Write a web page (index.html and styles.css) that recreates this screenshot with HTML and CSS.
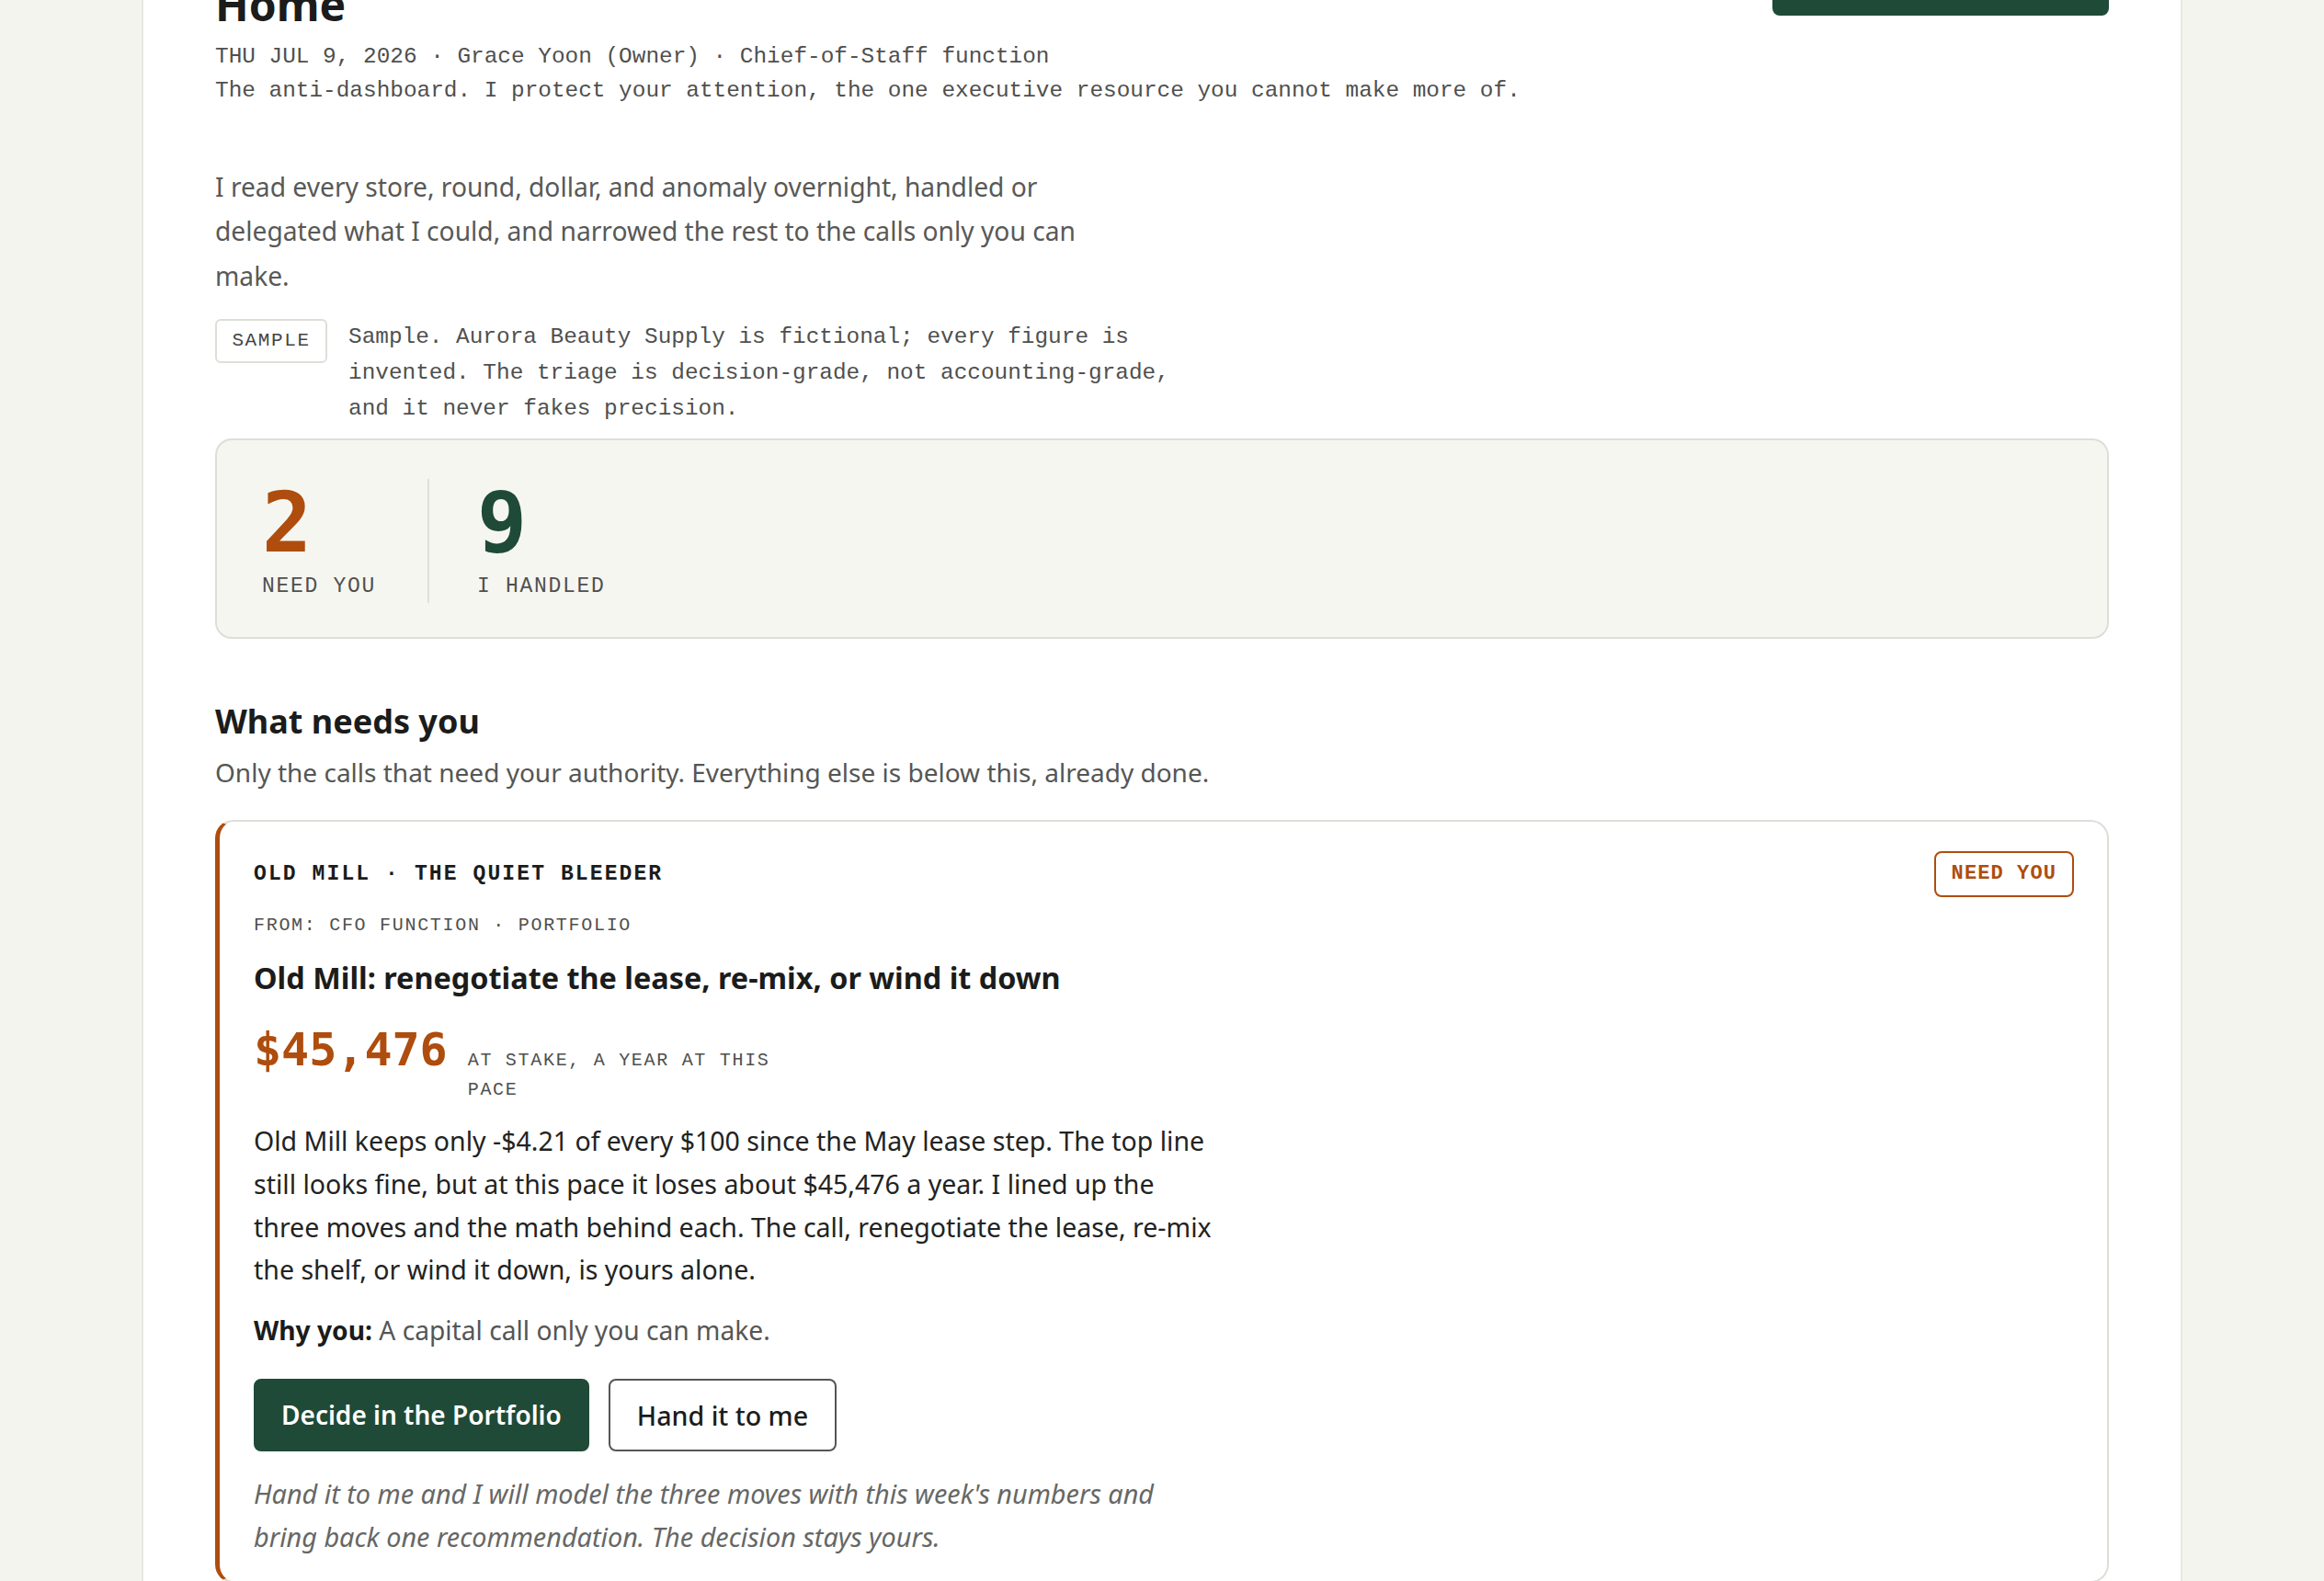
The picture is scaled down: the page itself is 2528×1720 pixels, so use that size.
FILE: index.html
```html
<!DOCTYPE html>
<html lang="en">
<head>
<meta charset="utf-8">
<title>Home · Chief-of-Staff</title>
<link rel="stylesheet" href="styles.css">
</head>
<body>
<main class="shell">
  <header class="top">
    <h1 class="title">Home</h1>
    <button class="btn btn-primary btn-top" type="button">Read the brief</button>
  </header>
  <p class="meta">THU JUL 9, 2026 · Grace Yoon (Owner) · Chief-of-Staff function</p>
  <p class="meta">The anti-dashboard. I protect your attention, the one executive resource you cannot make more of.</p>

  <p class="intro">I read every store, round, dollar, and anomaly overnight, handled or delegated what I could, and narrowed the rest to the calls only you can make.</p>

  <div class="sample">
    <span class="sample-tag">SAMPLE</span>
    <p class="sample-note">Sample. Aurora Beauty Supply is fictional; every figure is invented. The triage is decision-grade, not accounting-grade, and it never fakes precision.</p>
  </div>

  <section class="stats">
    <div class="stat">
      <div class="stat-num stat-num--need">2</div>
      <div class="stat-label">NEED YOU</div>
    </div>
    <div class="stat">
      <div class="stat-num stat-num--done">9</div>
      <div class="stat-label">I HANDLED</div>
    </div>
  </section>

  <section class="needs">
    <h2 class="section-title">What needs you</h2>
    <p class="section-sub">Only the calls that need your authority. Everything else is below this, already done.</p>

    <article class="card">
      <div class="card-head">
        <div class="kicker">OLD MILL · THE QUIET BLEEDER</div>
        <span class="badge">NEED YOU</span>
      </div>
      <div class="from">FROM: CFO FUNCTION · PORTFOLIO</div>
      <h3 class="card-title">Old Mill: renegotiate the lease, re-mix, or wind it down</h3>
      <div class="stake">
        <span class="stake-num">$45,476</span>
        <span class="stake-label">AT STAKE, A YEAR AT THIS PACE</span>
      </div>
      <p class="card-body">Old Mill keeps only -$4.21 of every $100 since the May lease step. The top line still looks fine, but at this pace it loses about $45,476 a year. I lined up the three moves and the math behind each. The call, renegotiate the lease, re-mix the shelf, or wind it down, is yours alone.</p>
      <p class="why"><strong>Why you:</strong> A capital call only you can make.</p>
      <div class="actions">
        <button class="btn btn-primary" type="button">Decide in the Portfolio</button>
        <button class="btn btn-ghost" type="button">Hand it to me</button>
      </div>
      <p class="note">Hand it to me and I will model the three moves with this week's numbers and bring back one recommendation. The decision stays yours.</p>
    </article>
  </section>
</main>
</body>
</html>
```
FILE: styles.css
```css
:root {
  --ink: #1b1c1b;
  --muted: #4f504e;
  --soft: #666765;
  --line: #deded9;
  --rust: #ae4d0e;
  --pine: #1f4a38;
  --paper: #f4f4ef;
  --panel: #f6f6f1;
  --sans: "Noto Sans", "Open Sans", sans-serif;
  --mono: "Liberation Mono", "DejaVu Sans Mono", monospace;
  --mono-num: "DejaVu Sans Mono", "Liberation Mono", monospace;
}

* { box-sizing: border-box; }

html, body {
  margin: 0;
  background: var(--paper);
  color: var(--ink);
  font-family: var(--sans);
}

.shell {
  display: flow-root;
  max-width: 2220px;
  min-height: 100vh;
  margin: 0 auto;
  padding: 0 78px;
  background: #fff;
  border-left: 2px solid #e7e7e2;
  border-right: 2px solid #e7e7e2;
}

/* buttons */
.btn {
  height: 79px;
  padding: 0 28px;
  border-radius: 8px;
  border: 2px solid transparent;
  font-family: var(--sans);
  font-size: 28px;
  font-weight: 600;
  cursor: pointer;
}

.btn-primary {
  background: var(--pine);
  border-color: var(--pine);
  color: #fff;
}

.btn-ghost {
  padding: 0 29px;
  background: #fff;
  border-color: #555654;
  color: var(--ink);
  font-size: 28.6px;
  font-weight: 500;
}

/* page header */
.top {
  display: flex;
  justify-content: space-between;
  align-items: flex-start;
  margin-top: -24px;
}

.title {
  margin: 0;
  font-size: 48px;
  line-height: 57.6px;
  font-weight: 700;
  color: var(--ink);
}

.btn.btn-top {
  width: 366px;
  height: 58px;
  margin-top: -17px;
  line-height: 40px;
  padding-bottom: 14px;
}

.meta {
  margin: 0;
  font-family: var(--mono);
  font-size: 24.4px;
  line-height: 37px;
  color: var(--muted);
}

.top + .meta { margin-top: 9.4px; }

.intro {
  max-width: 975px;
  margin: 62px 0 0;
  font-size: 28.2px;
  line-height: 48.5px;
  color: #585957;
}

/* sample disclaimer */
.sample {
  display: flex;
  align-items: flex-start;
  gap: 23px;
  margin-top: 23px;
}

.sample-tag {
  flex: none;
  width: 122px;
  height: 48px;
  border: 2px solid var(--line);
  border-radius: 6px;
  font-family: var(--mono);
  font-size: 21px;
  line-height: 44px;
  letter-spacing: 1.6px;
  text-align: center;
  color: #444543;
}

.sample-note {
  max-width: 950px;
  margin: 0;
  font-family: var(--mono);
  font-size: 24.4px;
  line-height: 39px;
  color: var(--muted);
}

/* counts panel */
.stats {
  display: flex;
  margin-top: 13px;
  padding: 42px 49px 37px;
  background: var(--panel);
  border: 2px solid var(--line);
  border-radius: 18px;
}

.stat {
  padding: 3px 56px 2px 0;
}

.stat + .stat {
  padding-left: 52px;
  padding-right: 0;
  border-left: 2px solid #e0e0db;
}

.stat-num {
  font-family: var(--mono-num);
  font-weight: 700;
  font-size: 90px;
  line-height: 90px;
}

.stat-num--need { color: var(--rust); }
.stat-num--done { color: var(--pine); }

.stat-label {
  margin-top: 8px;
  font-family: var(--mono);
  font-size: 23px;
  line-height: 32px;
  letter-spacing: 1.7px;
  color: var(--muted);
}

/* what needs you */
.section-title {
  margin: 67px 0 0;
  font-size: 36px;
  line-height: 45.5px;
  font-weight: 700;
  color: var(--ink);
}

.section-sub {
  margin: 10px 0 0;
  font-size: 28px;
  line-height: 44.8px;
  color: #555654;
}

.card {
  margin-top: 29px;
  padding: 32px 36px 25px 37px;
  border: 2px solid var(--line);
  border-left: 5px solid var(--rust);
  border-radius: 20px;
  background: #fff;
}

.card-head {
  display: flex;
  justify-content: space-between;
  align-items: center;
}

.kicker {
  font-family: var(--mono);
  font-weight: 700;
  font-size: 23px;
  line-height: 32px;
  letter-spacing: 2.1px;
  color: var(--ink);
}

.badge {
  height: 50px;
  padding: 0 17px;
  border: 2px solid var(--rust);
  border-radius: 8px;
  font-family: var(--mono);
  font-weight: 700;
  font-size: 22px;
  line-height: 46px;
  letter-spacing: 1.1px;
  color: var(--rust);
}

.from {
  margin-top: 17px;
  font-family: var(--mono);
  font-size: 20px;
  line-height: 28px;
  letter-spacing: 1.7px;
  color: var(--muted);
}

.card-title {
  margin: 21px 0 0;
  font-size: 32.4px;
  line-height: 43.7px;
  font-weight: 700;
  color: var(--ink);
}

.stake {
  display: flex;
  align-items: baseline;
  gap: 22px;
  margin-top: 31px;
}

.stake-num {
  font-family: var(--mono-num);
  font-weight: 700;
  font-size: 50px;
  line-height: 53px;
  color: var(--rust);
}

.stake-label {
  max-width: 360px;
  font-family: var(--mono);
  font-size: 20px;
  line-height: 32px;
  letter-spacing: 1.7px;
  color: var(--muted);
}

.card-body {
  max-width: 1046px;
  margin: 15.5px 0 0;
  font-size: 28.5px;
  line-height: 46.8px;
  color: #222321;
}

.why {
  margin: 19px 0 0;
  font-size: 28.2px;
  line-height: 46.5px;
  color: #555654;
}

.why strong {
  font-weight: 700;
  color: var(--ink);
}

.actions {
  display: flex;
  gap: 21px;
  margin-top: 29px;
}

.note {
  max-width: 1020px;
  margin: 22px 0 0;
  font-size: 28.8px;
  line-height: 47px;
  font-style: italic;
  color: var(--soft);
}
```
